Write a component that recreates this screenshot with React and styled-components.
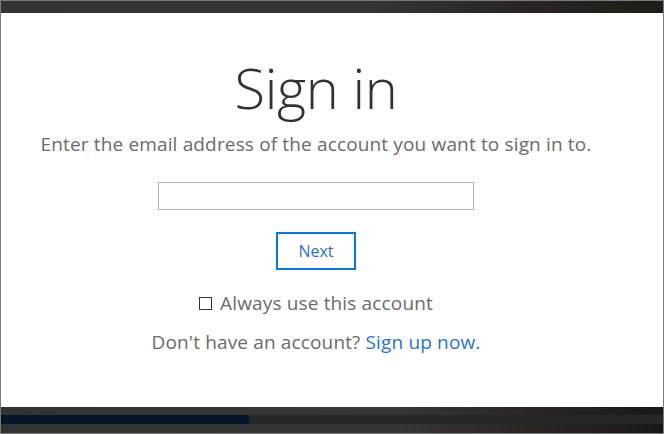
import React, { useState } from 'react';
import styled, { createGlobalStyle } from 'styled-components';

const GlobalStyle = createGlobalStyle`
  html, body {
    margin: 0;
    padding: 0;
    background: #333333;
  }
  * {
    box-sizing: border-box;
  }
`;

const App = () => {
  const [email, setEmail] = useState('');
  const [always, setAlways] = useState(false);

  return (
    <>
      <GlobalStyle />
      <Frame>
        <TopBand />
        <Panel>
          <Title>Sign in</Title>
          <Subtitle>Enter the email address of the account you want to sign in to.</Subtitle>
          <EmailInput
            type="email"
            value={email}
            onChange={(e) => setEmail(e.target.value)}
          />
          <NextButton type="button">Next</NextButton>
          <CheckRow>
            <CheckBox checked={always} onClick={() => setAlways(!always)} />
            <span>Always use this account</span>
          </CheckRow>
          <SignUpLine>
            Don't have an account? <SignUpLink href="#">Sign up now.</SignUpLink>
          </SignUpLine>
        </Panel>
        <BottomBand>
          <Progress>
            <ProgressFill />
          </Progress>
        </BottomBand>
      </Frame>
    </>
  );
};

const Frame = styled.div`
  width: 664px;
  height: 434px;
  border: 1px solid #7a7a7a;
  display: flex;
  flex-direction: column;
  overflow: hidden;
  font-family: "Open Sans", "Noto Sans", sans-serif;
`;

const TopBand = styled.div`
  height: 12px;
  flex-shrink: 0;
  background: linear-gradient(90deg, #333333 0%, #343434 55%, #2c2f33 65%, #2a2522 78%, #221c19 100%);
`;

const Panel = styled.div`
  height: 394px;
  flex-shrink: 0;
  background: #ffffff;
  display: flex;
  flex-direction: column;
  align-items: center;
  padding: 38px 32px 0 0;
`;

const Title = styled.h1`
  margin: 0;
  font-size: 56px;
  font-weight: 300;
  line-height: 72px;
  color: #2f3338;
  letter-spacing: -0.4px;
`;

const Subtitle = styled.p`
  margin: 9px 0 0;
  font-size: 19px;
  font-weight: 400;
  line-height: 24px;
  color: #6b6b6b;
  letter-spacing: 0.15px;
`;

const EmailInput = styled.input`
  margin-top: 26px;
  width: 316px;
  height: 28px;
  border: 1px solid #b3b3b3;
  outline: none;
  padding: 0 6px;
  font-size: 15px;
`;

const NextButton = styled.button`
  margin-top: 22px;
  width: 80px;
  height: 38px;
  border: 2px solid #0a78d6;
  background: #ffffff;
  color: #2e6fca;
  font-family: inherit;
  font-size: 16px;
  cursor: pointer;
`;

const CheckRow = styled.label`
  margin-top: 21px;
  display: flex;
  align-items: center;
  gap: 8px;
  font-size: 19px;
  line-height: 24px;
  color: #6b6b6b;
  letter-spacing: 0.15px;
  cursor: pointer;
`;

const CheckBox = styled.span`
  width: 13px;
  height: 13px;
  border: 1px solid #333333;
  background: ${(p) => (p.checked ? '#333333' : '#ffffff')};
  flex-shrink: 0;
`;

const SignUpLine = styled.p`
  margin: 15px 0 0;
  font-size: 19px;
  line-height: 24px;
  color: #6b6b6b;
  letter-spacing: 0.15px;
`;

const SignUpLink = styled.a`
  color: #2b74c6;
  text-decoration: none;
`;

const BottomBand = styled.div`
  flex: 1;
  padding-top: 8px;
  background: linear-gradient(90deg, #333333 0%, #353535 60%, #2a2624 80%, #18181c 100%);
`;

const Progress = styled.div`
  height: 9px;
  background: #262727;
`;

const ProgressFill = styled.div`
  width: 248px;
  height: 100%;
  background: #041728;
`;

export default App;
